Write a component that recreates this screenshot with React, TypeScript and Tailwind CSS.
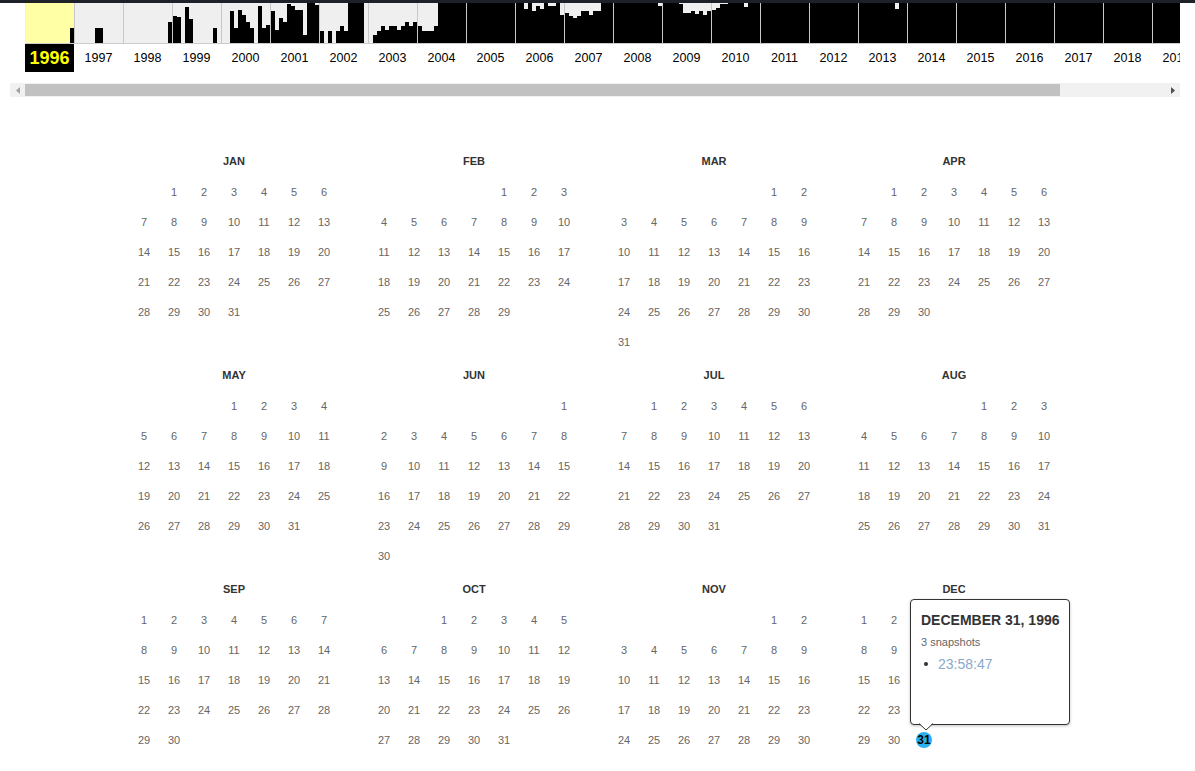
import React from "react";

const F = 40;
const BARS: Record<number, number[]> = {
  1996: [0, 0, 0, 0, 0, 0, 0, 0, 0, 0, 0, 15],
  1997: [0, 0, 0, 0, 0, 15, 15, 0, 0, 0, 0, 0],
  1998: [0, 0, 0, 0, 0, 0, 0, 0, 0, 0, 0, 21],
  1999: [27, 26, 0, 36, 24, 0, 0, 0, 0, 0, 15, 0],
  2000: [0, 0, 32, 15, 33, 28, 21, 15, 0, 37, 15, 18],
  2001: [32, 13, 25, 21, 39, 37, 33, 33, 8, F, F, 38],
  2002: [12, 0, 12, 0, 12, 17, 12, F, F, F, F, 0],
  2003: [0, 8, 12, 17, 13, 17, 17, 13, 17, 21, 17, 21],
  2004: [17, 12, 12, 12, 17, F, F, F, F, F, F, F],
  2005: [F, F, F, F, F, F, F, F, F, F, F, F],
  2006: [F, F, 34, F, 32, 37, 34, F, 37, 37, F, 28],
  2007: [30, 27, 25, 27, 32, 32, 28, 32, 32, F, F, F],
  2008: [F, F, F, F, F, F, F, F, F, F, F, 37],
  2009: [F, F, F, F, 39, 30, 30, 32, 29, 32, 28, 32],
  2010: [33, 35, 39, 39, F, F, F, F, 36, F, F, F],
  2011: [F, F, F, F, F, F, F, F, F, F, F, F],
  2012: [F, F, F, F, F, F, F, F, F, F, F, F],
  2013: [F, F, F, F, F, F, F, F, F, 34, F, F],
};

const YEARS: number[] = [];
for (let y = 1996; y <= 2019; y++) YEARS.push(y);

const MONTHS = ["JAN", "FEB", "MAR", "APR", "MAY", "JUN", "JUL", "AUG", "SEP", "OCT", "NOV", "DEC"];

function Sparkline() {
  return (
    <div className="ml-[10px] w-[1170px] overflow-hidden">
      <div className="flex pl-[15px]">
        {YEARS.map((y) => {
          const bars = BARS[y] ?? Array(12).fill(F);
          const sel = y === 1996;
          return (
            <div key={y} className="w-[49px] flex-none">
              <div
                className={
                  "h-[41px] flex items-end border-b border-[#cccccc] " +
                  (sel ? "bg-[#ffffa5] border-l border-l-[#f4f4d0]" : "bg-[#efefef] border-l border-l-[#c8c8c8]")
                }
              >
                {bars.map((h, i) => (
                  <div key={i} className="w-[4px] flex-none bg-black" style={{ height: h }} />
                ))}
              </div>
              <div className="h-[28px] flex items-center justify-center">
                {sel ? (
                  <div className="w-full h-full bg-black flex items-center justify-center text-[18px] font-bold text-[#ffff00] leading-none">
                    {y}
                  </div>
                ) : (
                  <span className="text-[12.5px] text-black leading-none">{y}</span>
                )}
              </div>
            </div>
          );
        })}
      </div>
    </div>
  );
}

function Scrollbar() {
  return (
    <div className="ml-[10px] w-[1170px] h-[14px] bg-[#f1f1f1] flex items-center mt-[11px]">
      <div className="w-[15px] h-full flex items-center justify-center">
        <svg width="4" height="7" viewBox="0 0 4 7">
          <polygon points="4,0 0,3.5 4,7" fill="#a3a3a3" />
        </svg>
      </div>
      <div className="w-[1035px] h-[12px] bg-[#c1c1c1]" />
      <div className="flex-1" />
      <div className="w-[15px] h-full flex items-center justify-center">
        <svg width="4" height="7" viewBox="0 0 4 7">
          <polygon points="0,0 4,3.5 0,7" fill="#505050" />
        </svg>
      </div>
    </div>
  );
}

function Tooltip() {
  return (
    <div className="absolute bottom-full left-[1px] w-[160px] h-[126px] bg-white border border-[#333] rounded-[4px] shadow-[0_1px_3px_rgba(0,0,0,0.25)] z-10 text-left px-[10px] pt-[11px]">
      <div className="text-[14px] font-bold text-[#333] leading-[18px] whitespace-nowrap">DECEMBER 31, 1996</div>
      <div className="text-[11px] text-[#666] leading-[14px] mt-[6px]">3 snapshots</div>
      <div className="flex items-center mt-[6px] leading-[18px]">
        <span className="w-[4px] h-[4px] rounded-full bg-[#333] ml-[3px] mr-[10px]" />
        <span className="text-[14px] text-[#8aa9cb]">23:58:47</span>
      </div>
      <svg className="absolute left-[8px] top-full -mt-[1px]" width="14" height="8" viewBox="0 0 14 8">
        <polygon points="0,0 7,7 14,0" fill="white" />
        <polyline points="0,0.5 7,7 14,0.5" fill="none" stroke="#333" strokeWidth="1" />
      </svg>
    </div>
  );
}

function Month({ m }: { m: number }) {
  const start = new Date(1996, m, 1).getDay();
  const n = new Date(1996, m + 1, 0).getDate();
  const cells: (number | null)[] = [];
  for (let i = 0; i < 42; i++) {
    const d = i - start + 1;
    cells.push(d >= 1 && d <= n ? d : null);
  }
  return (
    <div className="w-[210px]">
      <div className="h-[34px] pt-[10px] text-center text-[11px] font-bold text-[#333] leading-[16px]">{MONTHS[m]}</div>
      <div className="grid grid-cols-7">
        {cells.map((d, i) => {
          const special = m === 11 && d === 31;
          return (
            <div key={i} className="h-[30px] flex items-center justify-center relative text-[11px] text-[#666]">
              {special ? (
                <>
                  <Tooltip />
                  <div className="w-[16px] h-[16px] rounded-full bg-[#2ab1ee] flex items-center justify-center font-bold text-black text-[12px]">
                    31
                  </div>
                </>
              ) : (
                d ?? ""
              )}
            </div>
          );
        })}
      </div>
    </div>
  );
}

export default function App() {
  return (
    <div className="w-[1195px] h-[771px] overflow-hidden bg-white font-['Liberation_Sans',Arial,sans-serif]">
      <div className="h-[3px] bg-[#1f2129]" />
      <Sparkline />
      <Scrollbar />
      <div className="mt-[46px] ml-[129px] grid grid-cols-[repeat(4,210px)] gap-x-[30px]">
        {MONTHS.map((_, m) => (
          <Month key={m} m={m} />
        ))}
      </div>
    </div>
  );
}
